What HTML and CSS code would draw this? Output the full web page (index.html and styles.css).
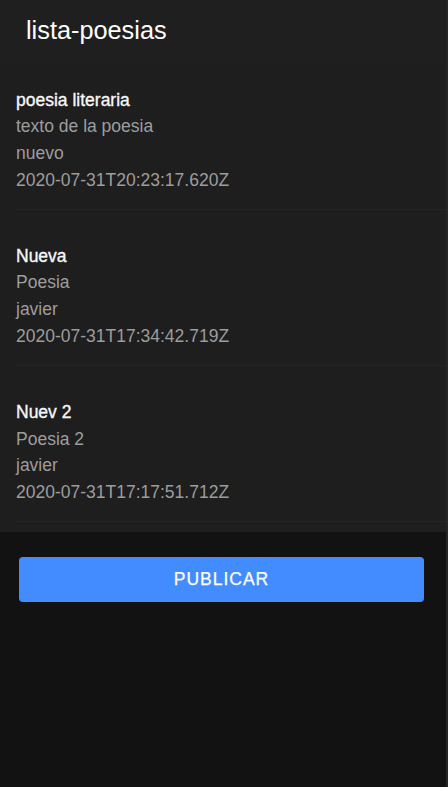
FILE: index.html
```html
<!DOCTYPE html>
<html lang="es">
<head>
<meta charset="utf-8">
<title>lista-poesias</title>
<link rel="stylesheet" href="styles.css">
</head>
<body>
<div class="app">
  <header class="toolbar">
    <h1 class="title">lista-poesias</h1>
  </header>
  <main class="content">
    <ul class="list">
      <li class="item">
        <div class="item-inner">
          <h2 class="poem-title">poesia literaria</h2>
          <p class="line">texto de la poesia</p>
          <p class="line">nuevo</p>
          <p class="line">2020-07-31T20:23:17.620Z</p>
        </div>
      </li>
      <li class="item">
        <div class="item-inner">
          <h2 class="poem-title">Nueva</h2>
          <p class="line">Poesia</p>
          <p class="line">javier</p>
          <p class="line">2020-07-31T17:34:42.719Z</p>
        </div>
      </li>
      <li class="item">
        <div class="item-inner">
          <h2 class="poem-title">Nuev 2</h2>
          <p class="line">Poesia 2</p>
          <p class="line">javier</p>
          <p class="line">2020-07-31T17:17:51.712Z</p>
        </div>
      </li>
    </ul>
    <button class="btn-primary" type="button">PUBLICAR</button>
  </main>
</div>
<div class="scroll-strip"></div>
</body>
</html>
```
FILE: styles.css
```css
* { box-sizing: border-box; }

html, body {
  margin: 0;
  padding: 0;
  height: 100%;
}

body {
  display: flex;
  background: #121212;
  font-family: "Liberation Sans", Arial, sans-serif;
  color: #ffffff;
  height: 787px;
  overflow: hidden;
}

.app {
  flex: 1;
  display: flex;
  flex-direction: column;
  min-width: 0;
}

.scroll-strip {
  width: 2px;
  background: #252525;
  flex: none;
}

.toolbar {
  height: 64px;
  background: #1f1f1f;
  display: flex;
  align-items: center;
  padding: 0 0 3px 26px;
  flex: none;
}

.title {
  margin: 0;
  font-size: 25.3px;
  font-weight: normal;
  color: #ffffff;
  line-height: 1.2;
}

.content {
  flex: 1;
  display: flex;
  flex-direction: column;
}

.list {
  list-style: none;
  margin: 0;
  padding: 0 0 10px 0;
  background: #1e1e1e;
}

.item {
  padding-left: 16px;
}

.item-inner {
  padding: 33px 0 15px 0;
  border-bottom: 1px solid #242424;
}

.item:first-child .item-inner {
  padding-top: 22.5px;
}

.poem-title,
.line {
  margin: 0;
  font-size: 17.5px;
  line-height: 26.8px;
  font-weight: normal;
}

.poem-title {
  color: #f7f7f7;
  -webkit-text-stroke: 0.35px #f7f7f7;
}

.line {
  color: #9d9d9d;
}

.btn-primary {
  margin: 25px 22px 0 19px;
  height: 45px;
  border: none;
  border-radius: 4px;
  background: #428cff;
  color: #ffffff;
  font-family: "Liberation Sans", Arial, sans-serif;
  font-size: 17.5px;
  letter-spacing: 1px;
  font-weight: normal;
  -webkit-text-stroke: 0.25px #ffffff;
  padding: 0;
  cursor: pointer;
}
```
